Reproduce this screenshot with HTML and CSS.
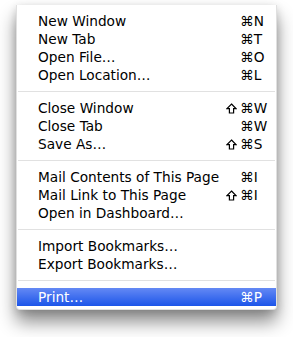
FILE: index.html
```html
<!DOCTYPE html>
<html lang="en">
<head>
    <meta charset="UTF-8">
    <title>File Menu</title>
    <link rel="stylesheet" href="styles.css">
</head>
<body>
    <div class="menu">
        <div class="item"><span class="label">New Window</span><span class="mods"></span><span class="key">⌘N</span></div>
        <div class="item"><span class="label">New Tab</span><span class="mods"></span><span class="key">⌘T</span></div>
        <div class="item"><span class="label">Open File…</span><span class="mods"></span><span class="key">⌘O</span></div>
        <div class="item"><span class="label">Open Location…</span><span class="mods"></span><span class="key">⌘L</span></div>

        <div class="separator"></div>

        <div class="item"><span class="label">Close Window</span><span class="mods"><svg class="shift" viewBox="0 0 11 11"><path d="M5.5 1 L10 5.6 H7.6 V10 H3.4 V5.6 H1 Z"/></svg></span><span class="key">⌘W</span></div>
        <div class="item"><span class="label">Close Tab</span><span class="mods"></span><span class="key">⌘W</span></div>
        <div class="item"><span class="label">Save As…</span><span class="mods"><svg class="shift" viewBox="0 0 11 11"><path d="M5.5 1 L10 5.6 H7.6 V10 H3.4 V5.6 H1 Z"/></svg></span><span class="key">⌘S</span></div>

        <div class="separator"></div>

        <div class="item"><span class="label">Mail Contents of This Page</span><span class="mods"></span><span class="key">⌘I</span></div>
        <div class="item"><span class="label">Mail Link to This Page</span><span class="mods"><svg class="shift" viewBox="0 0 11 11"><path d="M5.5 1 L10 5.6 H7.6 V10 H3.4 V5.6 H1 Z"/></svg></span><span class="key">⌘I</span></div>
        <div class="item"><span class="label">Open in Dashboard…</span><span class="mods"></span><span class="key"></span></div>

        <div class="separator"></div>

        <div class="item"><span class="label">Import Bookmarks…</span><span class="mods"></span><span class="key"></span></div>
        <div class="item"><span class="label">Export Bookmarks…</span><span class="mods"></span><span class="key"></span></div>

        <div class="separator"></div>

        <div class="item selected"><span class="label">Print…</span><span class="mods"></span><span class="key">⌘P</span></div>
    </div>
</body>
</html>
```

FILE: styles.css
```css
* {
    margin: 0;
    padding: 0;
    box-sizing: border-box;
}

html,
body {
    background: #fff;
}

body {
    min-height: 337px;
    padding: 5px 0 28px 16px;
    font-family: 'DejaVu Sans', Verdana, sans-serif;
    font-size: 13.7px;
    color: #000;
}

.menu {
    width: 261px;
    padding: 7px 0 3px;
    background: #fff;
    border: 1px solid rgba(0, 0, 0, 0.12);
    border-top: none;
    border-radius: 0 0 4px 4px;
    box-shadow: 0 12px 18px rgba(0, 0, 0, 0.45), 0 2px 8px rgba(0, 0, 0, 0.15);
}

.item {
    display: grid;
    grid-template-columns: 1fr 15px 37px;
    height: 18px;
    line-height: 18px;
    padding-left: 21px;
    white-space: nowrap;
}

.mods {
    display: flex;
    align-items: center;
    justify-content: flex-end;
    padding-right: 2px;
}

.shift {
    width: 11px;
    height: 11px;
    fill: none;
    stroke: currentColor;
    stroke-width: 1.2;
    stroke-linejoin: miter;
}

.key {
    padding-left: 1px;
}

.separator {
    height: 15px;
    display: flex;
    align-items: center;
    padding: 0 1px;
}

.separator::before {
    content: "";
    flex: 1;
    height: 1px;
    background: #e1e1e1;
}

.item.selected {
    background: linear-gradient(#6489f4, #1c55e9);
    color: #fff;
}
```
